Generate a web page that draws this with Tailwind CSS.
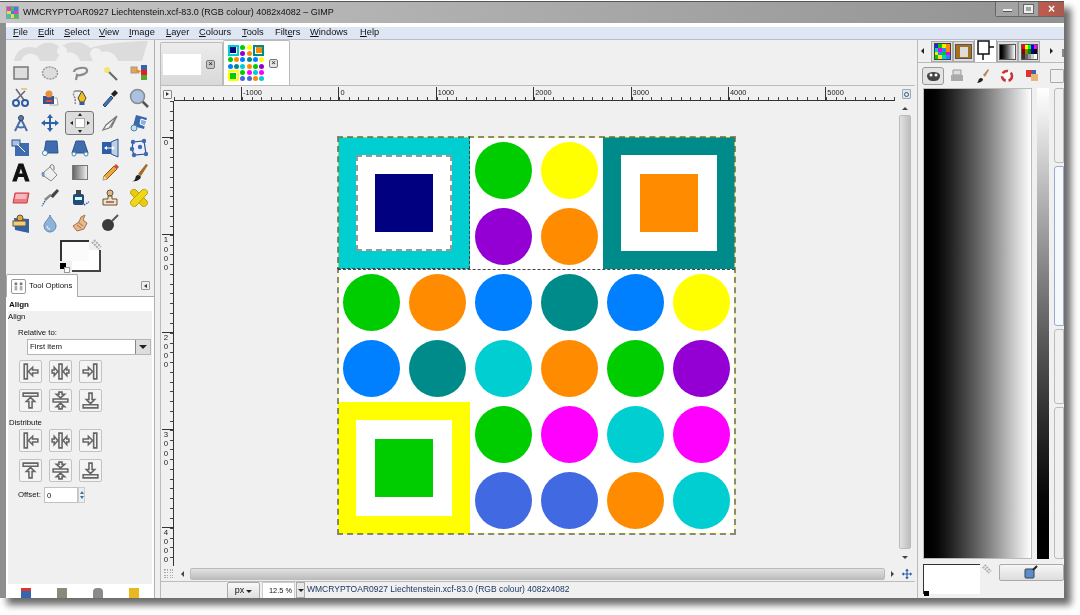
<!DOCTYPE html>
<html lang="en">
<head>
<meta charset="UTF-8">
<title>GIMP</title>
<script src="https://cdn.jsdelivr.net/npm/@tailwindcss/browser@4"></script>
</head>
<body class="w-[1080px] h-[615px] overflow-hidden bg-white font-['Liberation_Sans',sans-serif] text-[8px] text-[#111]">

<svg class="hidden">
  <symbol id="al" viewBox="0 0 20 20"><path d="M4 3h3v14H4zM8 10l4-4v2.500h5v3h-5V14z" fill="#f2f2f2" stroke="#666" stroke-width="1.500"/></symbol>
  <symbol id="ac" viewBox="0 0 20 20"><path d="M8.500 3h3v14h-3zM7.500 10L4 6v2.500H2v3h2V14zM12.500 10L16 6v2.500h2v3h-2V14z" fill="#f2f2f2" stroke="#666" stroke-width="1.500"/></symbol>
  <symbol id="ar" viewBox="0 0 20 20"><path d="M13 3h3v14h-3zM12 10L8 6v2.500H3v3h5V14z" fill="#f2f2f2" stroke="#666" stroke-width="1.500"/></symbol>
  <symbol id="at" viewBox="0 0 20 20"><path d="M3 3h14v3H3zM10 7l-4 4h2.500v6h3v-6H14z" fill="#f2f2f2" stroke="#666" stroke-width="1.500"/></symbol>
  <symbol id="am" viewBox="0 0 20 20"><path d="M3 8.500h14v3H3zM10 7.500L6 4h2.500V2h3v2H14zM10 12.500L6 16h2.500v2h3v-2H14z" fill="#f2f2f2" stroke="#666" stroke-width="1.500"/></symbol>
  <symbol id="ab" viewBox="0 0 20 20"><path d="M3 14h14v3H3zM10 13L6 9h2.500V3h3v6H14z" fill="#f2f2f2" stroke="#666" stroke-width="1.500"/></symbol>
</svg>

<div class="relative flex flex-col w-[1064px] h-[597px] mt-px bg-[#8e8e8e] shadow-[7px_7px_7px_#6b6b6b] blur-[0.3px]">

  <!-- title bar -->
  <div class="relative flex items-center h-[22px] pl-[6px] gap-[4px] bg-gradient-to-r from-[#c6c6c6] via-[#b5b5b5] via-30% to-[#929292] border-t border-[#555]">
    <div class="grid grid-cols-3 w-[13px] h-[13px] bg-[#dfe8f0] border border-[#999]">
      <i class="bg-[#e040c0]"></i><i class="bg-[#40c060]"></i><i class="bg-[#4080e0]"></i>
      <i class="bg-[#e0e040]"></i><i class="bg-[#4080e0]"></i><i class="bg-[#e040c0]"></i>
      <i class="bg-[#40c0c0]"></i><i class="bg-[#e0e040]"></i><i class="bg-[#40c060]"></i>
    </div>
    <span class="text-[9px] text-[#111] whitespace-nowrap">WMCRYPTOAR0927 Liechtenstein.xcf-83.0 (RGB colour) 4082x4082 – GIMP</span>
    <div class="absolute right-0 top-0 flex h-[15px] w-[69px] border-l border-b border-[#666] rounded-bl-[3px]">
      <div class="flex items-center justify-center w-[23px] bg-[#a3a3a3] border-r border-[#777]"><i class="block w-[9px] h-[3px] bg-[#eee] border-b border-[#555] mt-[3px]"></i></div>
      <div class="flex items-center justify-center w-[20px] bg-[#a3a3a3] border-r border-[#777]"><i class="block w-[9px] h-[8px] border-2 border-[#eee] outline outline-1 outline-[#666]"></i></div>
      <div class="flex-1 flex items-center justify-center text-white font-bold text-[12px] leading-none bg-gradient-to-r from-[#c25a4c] to-[#a85a50]">×</div>
    </div>
  </div>

  <div class="flex flex-col flex-1 min-h-0 ml-[6px] bg-[#f0f0f0]">
    <!-- menu -->
    <div class="h-[4px] bg-white"></div>
    <div class="flex items-center h-[13px] pl-[7px] bg-[#dfe6f3] border-b border-[#b9bfca] text-[9.300px] text-[#111] whitespace-nowrap">
      <span class="w-[25px]"><u>F</u>ile</span>
      <span class="w-[26px]"><u>E</u>dit</span>
      <span class="w-[35px]"><u>S</u>elect</span>
      <span class="w-[30px]"><u>V</u>iew</span>
      <span class="w-[37px]"><u>I</u>mage</span>
      <span class="w-[33px]"><u>L</u>ayer</span>
      <span class="w-[43px]"><u>C</u>olours</span>
      <span class="w-[33px]"><u>T</u>ools</span>
      <span class="w-[35px]">Filt<u>e</u>rs</span>
      <span class="w-[50px]"><u>W</u>indows</span>
      <span><u>H</u>elp</span>
    </div>

    <div class="flex flex-1 min-h-0">

      <!-- toolbox -->
      <div class="flex flex-col w-[149px] border-r border-[#b0b0b0]">
        <svg class="w-[148px] h-[21px] shrink-0" viewBox="0 0 148 21"><path d="M8 21C10 9 20 5 30 8C38 0 50 2 54 8C62 0 78 1 84 8C100 3 125 1 142 1L136 21H112C108 9 92 8 86 21H74C72 10 54 9 50 21H34C32 12 18 11 15 21Z" fill="#dcdcdc"/><circle cx="56" cy="11" r="5" fill="#f0f0f0"/><circle cx="90" cy="14" r="6" fill="#f0f0f0"/></svg>

        <div class="grid grid-cols-[repeat(5,29.600px)] auto-rows-[25px] shrink-0 -mt-px">
          <!-- row 1 -->
          <div class="flex items-center justify-center"><svg class="w-5 h-5" viewBox="0 0 20 20"><rect x="3" y="4" width="14" height="12" fill="#ddd" stroke="#777" stroke-width="1.500"/></svg></div>
          <div class="flex items-center justify-center"><svg class="w-5 h-5" viewBox="0 0 20 20"><ellipse cx="10" cy="10" rx="7.500" ry="6" fill="#ddd" stroke="#999" stroke-width="1.500" stroke-dasharray="2 1"/></svg></div>
          <div class="flex items-center justify-center"><svg class="w-5 h-5" viewBox="0 0 20 20"><path d="M4 9c0-4 12-6 13-2s-8 6-10 5l-1 5" fill="none" stroke="#8a8a8a" stroke-width="2.200"/></svg></div>
          <div class="flex items-center justify-center"><svg class="w-5 h-5" viewBox="0 0 20 20"><path d="M8 8l9 9" stroke="#666" stroke-width="2"/><circle cx="7" cy="7" r="3" fill="#f4e66a"/></svg></div>
          <div class="flex items-center justify-center"><svg class="w-5 h-5" viewBox="0 0 20 20"><rect x="12" y="2" width="6" height="5" fill="#3a62a8"/><rect x="12" y="7" width="6" height="5" fill="#d22"/><rect x="12" y="12" width="6" height="5" fill="#5a3"/><rect x="2" y="4" width="6" height="6" fill="#eda24a" stroke="#999"/><path d="M7 6l5 2-3 3z" fill="#e88a2a"/></svg></div>
          <!-- row 2 -->
          <div class="flex items-center justify-center"><svg class="w-5 h-5" viewBox="0 0 20 20"><path d="M5 1l8 11M14 3l-9 9" stroke="#667" stroke-width="1.500"/><path d="M10 1h6" stroke="#e8b878" stroke-width="1.500"/><circle cx="5" cy="15" r="3" fill="none" stroke="#2f5ca0" stroke-width="2"/><circle cx="14" cy="15" r="3" fill="none" stroke="#2f5ca0" stroke-width="2"/></svg></div>
          <div class="flex items-center justify-center"><svg class="w-5 h-5" viewBox="0 0 20 20"><path d="M12 10h5l1 7H10z" fill="#fff" stroke="#aaa"/><rect x="3" y="8" width="11" height="8" fill="#37528f"/><circle cx="9" cy="6" r="3.500" fill="#e9903a"/><path d="M6 12h6v2H6z" fill="#d44"/></svg></div>
          <div class="flex items-center justify-center"><svg class="w-5 h-5" viewBox="0 0 20 20"><path d="M5 3c-3 2-1 5 0 7s-1 4 1 7" fill="none" stroke="#888" stroke-width="1.500" stroke-dasharray="2 1"/><path d="M5 3h6" stroke="#888" stroke-width="1.500"/><path d="M12 3l4 7-2 4h-4l-2-4z" fill="#f0c020" stroke="#444"/><rect x="9.500" y="14" width="5" height="3" fill="#345a9c"/></svg></div>
          <div class="flex items-center justify-center"><svg class="w-5 h-5" viewBox="0 0 20 20"><path d="M3 17l8-9 2 2-8 9z" fill="#3f74b8" stroke="#27486f"/><path d="M11 6l4-4 3 3-4 4z" fill="#222"/></svg></div>
          <div class="flex items-center justify-center"><svg class="w-5 h-5" viewBox="0 0 20 20"><path d="M13 13l6 6" stroke="#555" stroke-width="2.500"/><circle cx="8.500" cy="8.500" r="7" fill="#a9c2e0" stroke="#8a8a8a" stroke-width="1.500"/></svg></div>
          <!-- row 3 -->
          <div class="flex items-center justify-center"><svg class="w-5 h-5" viewBox="0 0 20 20"><path d="M10 6L4 18M10 6l6 12M6 13c2 2 6 2 8 0" fill="none" stroke="#4a6ea8" stroke-width="2"/><circle cx="10" cy="5" r="2.500" fill="#5a7cb0" stroke="#345"/></svg></div>
          <div class="flex items-center justify-center"><svg class="w-5 h-5" viewBox="0 0 20 20"><path d="M10 1l3 4h-2v4h4V7l4 3-4 3v-2h-4v4h2l-3 4-3-4h2v-4H5v2l-4-3 4-3v2h4V5H7z" fill="#2d62aa"/></svg></div>
          <div class="flex items-center justify-center"><div class="flex items-center justify-center w-[29px] h-[24px] rounded-[3px] bg-[#dcdcdc] border border-[#777]"><svg class="w-5 h-5" viewBox="0 0 20 20"><rect x="5.500" y="5.500" width="9" height="9" fill="#fff" stroke="#aaa"/><path d="M10 0l2 3H8zM10 20l-2-3h4zM0 10l3-2v4zM20 10l-3 2V8z" fill="#222"/></svg></div></div>
          <div class="flex items-center justify-center"><svg class="w-5 h-5" viewBox="0 0 20 20"><path d="M17 3L6 12l-3 5 6-2zM17 3L11 15" fill="#f4f4f4" stroke="#777" stroke-width="1.200"/></svg></div>
          <div class="flex items-center justify-center"><svg class="w-5 h-5" viewBox="0 0 20 20"><path d="M7 2l11 3-3 11-11-3z" fill="#3b68ac"/><path d="M12 6l6 2-2 5-5-2z" fill="#8cb0dc" stroke="#fff"/><circle cx="5" cy="15" r="3" fill="#cde" stroke="#48a"/></svg></div>
          <!-- row 4 -->
          <div class="flex items-center justify-center"><svg class="w-5 h-5" viewBox="0 0 20 20"><rect x="4" y="5" width="14" height="13" fill="#3e6cae"/><rect x="1" y="2" width="8" height="6" fill="#a9c2e0" stroke="#2d5590"/><path d="M6 6l8 8" stroke="#fff"/></svg></div>
          <div class="flex items-center justify-center"><svg class="w-5 h-5" viewBox="0 0 20 20"><path d="M6 3h11l1 12H4z" fill="#3e6cae" stroke="#2d5590"/><circle cx="5" cy="15" r="2.500" fill="#fff" stroke="#48a"/></svg></div>
          <div class="flex items-center justify-center"><svg class="w-5 h-5" viewBox="0 0 20 20"><path d="M6 3h8l4 12H2z" fill="#3e6cae" stroke="#2d5590"/><circle cx="4" cy="16" r="2" fill="#fff" stroke="#48a"/><circle cx="16" cy="16" r="2" fill="#fff" stroke="#48a"/></svg></div>
          <div class="flex items-center justify-center"><svg class="w-5 h-5" viewBox="0 0 20 20"><path d="M2 4h9v12H2z" fill="#2d5fa8"/><path d="M11 4l7-3v18l-7-3z" fill="#bcd0e8" stroke="#2d5590"/><path d="M4 10l3-2v4zM15 10l-3-2v4z" fill="#fff"/><path d="M7 9.500h5v1H7z" fill="#fff"/></svg></div>
          <div class="flex items-center justify-center"><svg class="w-5 h-5" viewBox="0 0 20 20"><path d="M4 4l11-1 2 13-12 1-2-6z" fill="#eef" stroke="#2d5590" stroke-width="1.200"/><g fill="#3e6cae"><circle cx="4" cy="4" r="2.200"/><circle cx="15" cy="3" r="2.200"/><circle cx="17" cy="16" r="2.200"/><circle cx="5" cy="17" r="2.200"/><circle cx="3" cy="11" r="2.200"/><circle cx="11" cy="9" r="2.200"/></g></svg></div>
          <!-- row 5 -->
          <div class="flex items-center justify-center"><span class="font-black text-[24px] leading-none text-[#111] [-webkit-text-stroke:1px_#111]">A</span></div>
          <div class="flex items-center justify-center"><svg class="w-5 h-5" viewBox="0 0 20 20"><path d="M4 9l6-5 7 8-6 6-7-5z" fill="#eee" stroke="#888"/><path d="M10 4c0-3 4-3 4 0v3" fill="none" stroke="#777"/><path d="M2 9c-1 3 0 5 2 5V9z" fill="#6f94c4"/></svg></div>
          <div class="flex items-center justify-center"><div class="w-[16px] h-[15px] border border-[#777] bg-gradient-to-r from-[#666] to-[#eee]"></div></div>
          <div class="flex items-center justify-center"><svg class="w-5 h-5" viewBox="0 0 20 20"><path d="M3 17l1-4L14 3l3 3L7 16z" fill="#eca63a" stroke="#86591c"/><path d="M14 3l3 3 2-2-3-3z" fill="#d44"/><path d="M3 17l1-4 3 3z" fill="#f2d8ae"/></svg></div>
          <div class="flex items-center justify-center"><svg class="w-5 h-5" viewBox="0 0 20 20"><path d="M9 11L17 1l2 1-7 11z" fill="#a86a28"/><path d="M3 18c3 0 3-2 4-5 2-2 4-1 5 1-1 3-5 5-9 4z" fill="#222"/></svg></div>
          <!-- row 6 -->
          <div class="flex items-center justify-center"><svg class="w-5 h-5" viewBox="0 0 20 20"><path d="M4 5h14l-2 10H2z" fill="#ee7a82" stroke="#cc3c44"/><path d="M5 6h11l-1 5H4z" fill="#f9b8ba"/></svg></div>
          <div class="flex items-center justify-center"><svg class="w-5 h-5" viewBox="0 0 20 20"><path d="M17 1l2 2-6 7-3-2z" fill="#444"/><path d="M12 7L6 13l-2-2 6-5z" fill="#888"/><path d="M5 13l-3 5" stroke="#2d62aa" stroke-width="1.500" stroke-dasharray="1.500 1"/></svg></div>
          <div class="flex items-center justify-center"><svg class="w-5 h-5" viewBox="0 0 20 20"><rect x="3" y="6" width="11" height="11" rx="2" fill="#264a78"/><rect x="6" y="2" width="5" height="4" fill="#444"/><rect x="5" y="9" width="7" height="3" fill="#cfe"/><path d="M14 17l5-3" stroke="#2d62aa" stroke-width="1.500" stroke-dasharray="1.500 1"/></svg></div>
          <div class="flex items-center justify-center"><svg class="w-5 h-5" viewBox="0 0 20 20"><circle cx="10" cy="5" r="3" fill="#d9b98a" stroke="#6b5330"/><path d="M8 8h4v3h5v6H3v-6h5z" fill="#efe2c8" stroke="#6b5330"/><rect x="6" y="13" width="8" height="2" fill="#a77"/></svg></div>
          <div class="flex items-center justify-center"><svg class="w-5 h-5" viewBox="0 0 20 20"><path d="M2 6c-2-3 2-6 5-4l11 11c2 3-2 7-5 5z" fill="#e8cc10" stroke="#b8a010"/><path d="M18 6c2-3-2-6-5-4L2 13c-2 3 2 7 5 5z" fill="#f0d818" stroke="#b8a010"/></svg></div>
          <!-- row 7 -->
          <div class="flex items-center justify-center"><svg class="w-5 h-5" viewBox="0 0 20 20"><path d="M3 5l15 1v14L4 17z" fill="#3560a4"/><circle cx="9" cy="5" r="3" fill="#e0a83e" stroke="#654"/><rect x="2" y="8" width="13" height="5" fill="#f0d070" stroke="#654"/></svg></div>
          <div class="flex items-center justify-center"><svg class="w-5 h-5" viewBox="0 0 20 20"><path d="M10 2c1 4 6 7 6 11a6 6 0 01-12 0c0-4 5-7 6-11z" fill="#8fb3d8" stroke="#5c86b4"/><path d="M7 13c0 2 1 3 3 3" stroke="#fff" fill="none"/></svg></div>
          <div class="flex items-center justify-center"><svg class="w-5 h-5" viewBox="0 0 20 20"><path d="M15 2l-2 5 4 3-3 6-7 2-4-5 6-4 2-5z" fill="#eab78c" stroke="#a57248"/><path d="M8 9l5 4M7 12l4 3" stroke="#a57248"/></svg></div>
          <div class="flex items-center justify-center"><svg class="w-5 h-5" viewBox="0 0 20 20"><circle cx="8" cy="12" r="6" fill="#3b3b3b"/><path d="M12 8l6-6" stroke="#555" stroke-width="2"/></svg></div>
        </div>

        <!-- fg/bg colours -->
        <div class="relative h-[39px] shrink-0">
          <div class="absolute left-[66px] top-[15px] w-[29px] h-[22px] bg-white border-r-2 border-b-2 border-[#444]"></div>
          <div class="absolute left-[54px] top-[5px] w-[29px] h-[21px] bg-[#fbfbfb] border-t-2 border-l-2 border-[#333]"></div>
          <div class="absolute left-[54px] top-[28px] w-[6px] h-[6px] bg-black"></div>
          <div class="absolute left-[58px] top-[32px] w-[6px] h-[6px] bg-white border border-[#999]"></div>
          <svg class="absolute left-[85px] top-[4px] w-[11px] h-[11px]" viewBox="0 0 11 11"><path d="M1 3l7 7M3 1l7 7" stroke="#aaa" stroke-width="2" stroke-dasharray="2 1"/></svg>
        </div>

        <!-- tool options -->
        <div class="flex items-center shrink-0 -mb-px z-10">
          <div class="flex items-center h-[23px] w-[72px] gap-[3px] pl-[4px] bg-white border border-b-0 border-[#aaa] rounded-t-[2px] text-[7.800px] whitespace-nowrap">
            <svg class="w-[15px] h-[15px] shrink-0 border border-[#999] rounded-[2px]" viewBox="0 0 15 15"><path d="M3 3h3v3H3zM9 3h3v3H9z" fill="#777"/><rect x="3" y="7" width="3" height="5" fill="#aaa"/><rect x="9" y="7" width="3" height="5" fill="#aaa"/></svg>
            Tool Options
          </div>
          <div class="flex items-center justify-center w-[9px] h-[9px] ml-[63px] bg-[#eee] border border-[#999] rounded-[1px]"><i class="block border-y-[2px] border-r-[3px] border-y-transparent border-r-[#333]"></i></div>
        </div>
        <div class="flex flex-col flex-1 min-h-0 bg-white border-t border-[#aaa] overflow-hidden">
          <div class="h-[14px] pl-[3px] font-bold text-[8px] leading-[15px] text-[#111]">Align</div>
          <div class="flex flex-col h-[273px] mx-[2px] pl-[1px] bg-[#f0f0f0]">
            <div class="text-[7.800px] leading-[11px] -ml-[1px]">Align</div>
            <div class="mt-[5px] ml-[9px] text-[7.800px] leading-[11px]">Relative to:</div>
            <div class="flex items-center w-[124px] h-[16px] mt-[1px] ml-[18px] bg-white border border-[#b5b5b5] text-[7.800px] pl-[2px]">First item<span class="ml-auto flex items-center justify-center w-[15px] h-[14px] bg-[#ddd] border-l border-[#888]"><i class="block border-x-[4px] border-t-[4px] border-x-transparent border-t-[#222]"></i></span></div>
            <div class="grid grid-cols-[repeat(3,23px)] gap-x-[7px] gap-y-[6px] mt-[5px] ml-[10px]">
              <div class="h-[23px] border border-[#c2c2c2] rounded-[2px] bg-[#f4f4f4]"><svg class="w-[21px] h-[21px]"><use href="#al"/></svg></div>
              <div class="h-[23px] border border-[#c2c2c2] rounded-[2px] bg-[#f4f4f4]"><svg class="w-[21px] h-[21px]"><use href="#ac"/></svg></div>
              <div class="h-[23px] border border-[#c2c2c2] rounded-[2px] bg-[#f4f4f4]"><svg class="w-[21px] h-[21px]"><use href="#ar"/></svg></div>
              <div class="h-[23px] border border-[#c2c2c2] rounded-[2px] bg-[#f4f4f4]"><svg class="w-[21px] h-[21px]"><use href="#at"/></svg></div>
              <div class="h-[23px] border border-[#c2c2c2] rounded-[2px] bg-[#f4f4f4]"><svg class="w-[21px] h-[21px]"><use href="#am"/></svg></div>
              <div class="h-[23px] border border-[#c2c2c2] rounded-[2px] bg-[#f4f4f4]"><svg class="w-[21px] h-[21px]"><use href="#ab"/></svg></div>
            </div>
            <div class="mt-[5px] text-[7.800px] leading-[11px]">Distribute</div>
            <div class="grid grid-cols-[repeat(3,23px)] gap-x-[7px] gap-y-[7px] mt-[1px] ml-[10px]">
              <div class="h-[23px] border border-[#c2c2c2] rounded-[2px] bg-[#f4f4f4]"><svg class="w-[21px] h-[21px]"><use href="#al"/></svg></div>
              <div class="h-[23px] border border-[#c2c2c2] rounded-[2px] bg-[#f4f4f4]"><svg class="w-[21px] h-[21px]"><use href="#ac"/></svg></div>
              <div class="h-[23px] border border-[#c2c2c2] rounded-[2px] bg-[#f4f4f4]"><svg class="w-[21px] h-[21px]"><use href="#ar"/></svg></div>
              <div class="h-[23px] border border-[#c2c2c2] rounded-[2px] bg-[#f4f4f4]"><svg class="w-[21px] h-[21px]"><use href="#at"/></svg></div>
              <div class="h-[23px] border border-[#c2c2c2] rounded-[2px] bg-[#f4f4f4]"><svg class="w-[21px] h-[21px]"><use href="#am"/></svg></div>
              <div class="h-[23px] border border-[#c2c2c2] rounded-[2px] bg-[#f4f4f4]"><svg class="w-[21px] h-[21px]"><use href="#ab"/></svg></div>
            </div>
            <div class="flex items-center mt-[5px] ml-[9px] text-[7.800px]">
              <span class="w-[26px]">Offset:</span>
              <div class="w-[34px] h-[16px] pl-[2px] leading-[15px] bg-white border border-[#c2c2c2]">0</div>
              <div class="flex flex-col justify-center items-center gap-[2px] w-[7px] h-[16px] bg-[#eee] border border-[#ccc]"><i class="block border-x-[2px] border-b-[3px] border-x-transparent border-b-[#37a]"></i><i class="block border-x-[2px] border-t-[3px] border-x-transparent border-t-[#37a]"></i></div>
            </div>
          </div>
          <div class="flex flex-1 pl-[15px] pt-[4px] gap-[26px]">
            <i class="block w-[10px] h-[10px] bg-[#3566ac] border-t-[3px] border-[#d33]"></i>
            <i class="block w-[10px] h-[10px] bg-[#8a8a7a]"></i>
            <i class="block w-[10px] h-[10px] bg-[#8a8a8a] rounded-t-[4px]"></i>
            <i class="block w-[10px] h-[10px] bg-[#e8b820]"></i>
          </div>
        </div>
      </div>

      <!-- image window -->
      <div class="flex flex-col w-[755px] ml-[5px] min-h-0">
        <!-- tabs -->
        <div class="flex items-end h-[45px] shrink-0">
          <div class="flex items-center h-[43px] w-[63px] pl-[2px] bg-gradient-to-b from-[#ececec] to-[#d9d9d9] border border-b-0 border-[#bbb] rounded-t-[2px]">
            <div class="w-[38px] h-[21px] bg-white"></div>
            <div class="flex items-center justify-center w-[9px] h-[9px] ml-[5px] bg-[#c8c8c8] border border-[#777] rounded-[2px] text-[8px] leading-none">×</div>
          </div>
          <div class="flex items-center h-[45px] w-[67px] pl-[3px] bg-white border border-b-0 border-[#bbb] rounded-t-[2px]">
            <div class="grid grid-cols-6 grid-rows-6 w-[38px] h-[38px]">
              <div class="col-span-2 row-span-2 p-[1px]"><div class="w-full h-full border-2 border-[#00ced1] flex items-center justify-center"><i class="block w-[6px] h-[6px] bg-[#000080]"></i></div></div>
              <i class="m-auto block w-[5px] h-[5px] rounded-full bg-[#00cd00]"></i>
              <i class="m-auto block w-[5px] h-[5px] rounded-full bg-[#ffff00]"></i>
              <div class="col-span-2 row-span-2 p-[1px]"><div class="w-full h-full border-2 border-[#008b8b] flex items-center justify-center"><i class="block w-[6px] h-[6px] bg-[#ff8c00]"></i></div></div>
              <i class="m-auto block w-[5px] h-[5px] rounded-full bg-[#9400d3]"></i>
              <i class="m-auto block w-[5px] h-[5px] rounded-full bg-[#ff8c00]"></i>
              <i class="m-auto block w-[5px] h-[5px] rounded-full bg-[#00cd00]"></i>
              <i class="m-auto block w-[5px] h-[5px] rounded-full bg-[#ff8c00]"></i>
              <i class="m-auto block w-[5px] h-[5px] rounded-full bg-[#007fff]"></i>
              <i class="m-auto block w-[5px] h-[5px] rounded-full bg-[#008b8b]"></i>
              <i class="m-auto block w-[5px] h-[5px] rounded-full bg-[#007fff]"></i>
              <i class="m-auto block w-[5px] h-[5px] rounded-full bg-[#ffff00]"></i>
              <i class="m-auto block w-[5px] h-[5px] rounded-full bg-[#007fff]"></i>
              <i class="m-auto block w-[5px] h-[5px] rounded-full bg-[#008b8b]"></i>
              <i class="m-auto block w-[5px] h-[5px] rounded-full bg-[#00ced1]"></i>
              <i class="m-auto block w-[5px] h-[5px] rounded-full bg-[#ff8c00]"></i>
              <i class="m-auto block w-[5px] h-[5px] rounded-full bg-[#00cd00]"></i>
              <i class="m-auto block w-[5px] h-[5px] rounded-full bg-[#9400d3]"></i>
              <div class="col-span-2 row-span-2 p-[1px]"><div class="w-full h-full border-2 border-[#ffff00] flex items-center justify-center"><i class="block w-[6px] h-[6px] bg-[#00cd00]"></i></div></div>
              <i class="m-auto block w-[5px] h-[5px] rounded-full bg-[#00cd00]"></i>
              <i class="m-auto block w-[5px] h-[5px] rounded-full bg-[#ff00ff]"></i>
              <i class="m-auto block w-[5px] h-[5px] rounded-full bg-[#00ced1]"></i>
              <i class="m-auto block w-[5px] h-[5px] rounded-full bg-[#ff00ff]"></i>
              <i class="m-auto block w-[5px] h-[5px] rounded-full bg-[#4169e1]"></i>
              <i class="m-auto block w-[5px] h-[5px] rounded-full bg-[#4169e1]"></i>
              <i class="m-auto block w-[5px] h-[5px] rounded-full bg-[#ff8c00]"></i>
              <i class="m-auto block w-[5px] h-[5px] rounded-full bg-[#00ced1]"></i>
            </div>
            <div class="flex items-center justify-center w-[9px] h-[9px] ml-[4px] bg-[#e4e4e4] border border-[#777] rounded-[2px] text-[8px] leading-none">×</div>
          </div>
        </div>

        <!-- canvas frame -->
        <div class="flex flex-col flex-1 min-h-0 border-l border-t border-[#bbb]">
          <!-- hruler -->
          <div class="flex h-[14px] shrink-0 mt-px">
            <div class="flex items-center justify-center w-[13px] pl-[1px]"><div class="flex items-center justify-center w-[9px] h-[9px] bg-[#f6f6f6] border border-[#888] rounded-[1px]"><i class="block border-y-[2px] border-l-[3px] border-y-transparent border-l-[#333]"></i></div></div>
            <div class="flex w-[722px] border-b border-[#333] text-[7.400px] leading-[11px] text-[#222] overflow-hidden">
              <div class="relative w-[67px] shrink-0"><i class="absolute bottom-0 inset-x-0 h-[3px] bg-[repeating-linear-gradient(90deg,#444_0,#444_1px,transparent_1px,transparent_9.740px)]"></i></div>
              <div class="relative w-[97.400px] shrink-0 border-l border-[#333] pl-[1px]">-1000<i class="absolute bottom-0 inset-x-0 h-[3px] bg-[repeating-linear-gradient(90deg,#444_0,#444_1px,transparent_1px,transparent_9.740px)]"></i></div>
              <div class="relative w-[97.400px] shrink-0 border-l border-[#333] pl-[1px]">0<i class="absolute bottom-0 inset-x-0 h-[3px] bg-[repeating-linear-gradient(90deg,#444_0,#444_1px,transparent_1px,transparent_9.740px)]"></i></div>
              <div class="relative w-[97.400px] shrink-0 border-l border-[#333] pl-[1px]">1000<i class="absolute bottom-0 inset-x-0 h-[3px] bg-[repeating-linear-gradient(90deg,#444_0,#444_1px,transparent_1px,transparent_9.740px)]"></i></div>
              <div class="relative w-[97.400px] shrink-0 border-l border-[#333] pl-[1px]">2000<i class="absolute bottom-0 inset-x-0 h-[3px] bg-[repeating-linear-gradient(90deg,#444_0,#444_1px,transparent_1px,transparent_9.740px)]"></i></div>
              <div class="relative w-[97.400px] shrink-0 border-l border-[#333] pl-[1px]">3000<i class="absolute bottom-0 inset-x-0 h-[3px] bg-[repeating-linear-gradient(90deg,#444_0,#444_1px,transparent_1px,transparent_9.740px)]"></i></div>
              <div class="relative w-[97.400px] shrink-0 border-l border-[#333] pl-[1px]">4000<i class="absolute bottom-0 inset-x-0 h-[3px] bg-[repeating-linear-gradient(90deg,#444_0,#444_1px,transparent_1px,transparent_9.740px)]"></i></div>
              <div class="relative w-[97.400px] shrink-0 border-l border-[#333] pl-[1px]">5000<i class="absolute bottom-0 inset-x-0 h-[3px] bg-[repeating-linear-gradient(90deg,#444_0,#444_1px,transparent_1px,transparent_9.740px)]"></i></div>
            </div>
            <div class="flex items-center justify-center w-[20px] pl-[3px]"><div class="flex items-center justify-center w-[9px] h-[10px] bg-[#dde6f0] border border-[#9ab] rounded-[1px]"><i class="block w-[5px] h-[5px] rounded-full border border-[#456]"></i></div></div>
          </div>

          <div class="flex h-[465px] shrink-0">
            <!-- vruler -->
            <div class="flex flex-col w-[13px] border-r border-[#333] text-[7.800px] leading-[9.200px] text-[#222] text-center overflow-hidden pl-[1px]">
              <div class="relative h-[36px] shrink-0"><i class="absolute right-0 inset-y-0 w-[3px] bg-[repeating-linear-gradient(180deg,#444_0,#444_1px,transparent_1px,transparent_9.740px)]"></i></div>
              <div class="relative h-[97.400px] shrink-0 border-t border-[#333] pr-[3px]">0<i class="absolute right-0 inset-y-0 w-[3px] bg-[repeating-linear-gradient(180deg,#444_0,#444_1px,transparent_1px,transparent_9.740px)]"></i></div>
              <div class="relative h-[97.400px] shrink-0 border-t border-[#333] pr-[3px]">1<br>0<br>0<br>0<i class="absolute right-0 inset-y-0 w-[3px] bg-[repeating-linear-gradient(180deg,#444_0,#444_1px,transparent_1px,transparent_9.740px)]"></i></div>
              <div class="relative h-[97.400px] shrink-0 border-t border-[#333] pr-[3px]">2<br>0<br>0<br>0<i class="absolute right-0 inset-y-0 w-[3px] bg-[repeating-linear-gradient(180deg,#444_0,#444_1px,transparent_1px,transparent_9.740px)]"></i></div>
              <div class="relative h-[97.400px] shrink-0 border-t border-[#333] pr-[3px]">3<br>0<br>0<br>0<i class="absolute right-0 inset-y-0 w-[3px] bg-[repeating-linear-gradient(180deg,#444_0,#444_1px,transparent_1px,transparent_9.740px)]"></i></div>
              <div class="relative h-[40px] shrink-0 border-t border-[#333] pr-[3px]">4<br>0<br>0<br>0<i class="absolute right-0 inset-y-0 w-[3px] bg-[repeating-linear-gradient(180deg,#444_0,#444_1px,transparent_1px,transparent_9.740px)]"></i></div>
            </div>

            <!-- canvas -->
            <div class="w-[722px] pt-[36px] pl-[164px] bg-[#f0f0f0]">
              <div class="relative grid grid-cols-[repeat(6,66.170px)] grid-rows-[repeat(6,66.170px)] w-[397px] h-[397px] bg-white">
                <div class="col-span-2 row-span-2 flex items-center justify-center bg-[#00ced1]">
                  <div class="flex items-center justify-center w-[96px] h-[96px] bg-white border-2 border-dashed border-[#555]/60 rounded-[2px]"><div class="w-[58px] h-[58px] bg-[#000080]"></div></div>
                </div>
                <i class="m-auto block w-[57px] h-[57px] rounded-full bg-[#00cd00]"></i>
                <i class="m-auto block w-[57px] h-[57px] rounded-full bg-[#ffff00]"></i>
                <div class="col-span-2 row-span-2 flex items-center justify-center bg-[#008b8b]">
                  <div class="flex items-center justify-center w-[96px] h-[96px] bg-white"><div class="w-[58px] h-[58px] bg-[#ff8c00]"></div></div>
                </div>
                <i class="m-auto block w-[57px] h-[57px] rounded-full bg-[#9400d3]"></i>
                <i class="m-auto block w-[57px] h-[57px] rounded-full bg-[#ff8c00]"></i>

                <i class="m-auto block w-[57px] h-[57px] rounded-full bg-[#00cd00]"></i>
                <i class="m-auto block w-[57px] h-[57px] rounded-full bg-[#ff8c00]"></i>
                <i class="m-auto block w-[57px] h-[57px] rounded-full bg-[#007fff]"></i>
                <i class="m-auto block w-[57px] h-[57px] rounded-full bg-[#008b8b]"></i>
                <i class="m-auto block w-[57px] h-[57px] rounded-full bg-[#007fff]"></i>
                <i class="m-auto block w-[57px] h-[57px] rounded-full bg-[#ffff00]"></i>

                <i class="m-auto block w-[57px] h-[57px] rounded-full bg-[#007fff]"></i>
                <i class="m-auto block w-[57px] h-[57px] rounded-full bg-[#008b8b]"></i>
                <i class="m-auto block w-[57px] h-[57px] rounded-full bg-[#00ced1]"></i>
                <i class="m-auto block w-[57px] h-[57px] rounded-full bg-[#ff8c00]"></i>
                <i class="m-auto block w-[57px] h-[57px] rounded-full bg-[#00cd00]"></i>
                <i class="m-auto block w-[57px] h-[57px] rounded-full bg-[#9400d3]"></i>

                <div class="col-span-2 row-span-2 flex items-center justify-center bg-[#ffff00]">
                  <div class="flex items-center justify-center w-[96px] h-[96px] bg-white"><div class="w-[58px] h-[58px] bg-[#00cd00]"></div></div>
                </div>
                <i class="m-auto block w-[57px] h-[57px] rounded-full bg-[#00cd00]"></i>
                <i class="m-auto block w-[57px] h-[57px] rounded-full bg-[#ff00ff]"></i>
                <i class="m-auto block w-[57px] h-[57px] rounded-full bg-[#00ced1]"></i>
                <i class="m-auto block w-[57px] h-[57px] rounded-full bg-[#ff00ff]"></i>
                <i class="m-auto block w-[57px] h-[57px] rounded-full bg-[#4169e1]"></i>
                <i class="m-auto block w-[57px] h-[57px] rounded-full bg-[#4169e1]"></i>
                <i class="m-auto block w-[57px] h-[57px] rounded-full bg-[#ff8c00]"></i>
                <i class="m-auto block w-[57px] h-[57px] rounded-full bg-[#00ced1]"></i>

                <!-- selection marching ants -->
                <div class="absolute inset-0 border border-[#ffff00]/50 pointer-events-none"></div>
                <div class="absolute -inset-px border-2 border-dashed border-[#444]/60 pointer-events-none"></div>
                <div class="absolute left-0 top-[132px] w-[397px] border-t border-dashed border-[#444] pointer-events-none"></div>
                <div class="absolute -left-px -top-px w-[133px] h-[133px] border-r border-b border-dashed border-[#444] pointer-events-none"></div>
              </div>
            </div>

            <!-- vscroll -->
            <div class="flex flex-col items-center w-[19px] pl-[3px] pr-[4px]">
              <i class="block mt-[6px] border-x-[3px] border-b-[3px] border-x-transparent border-b-[#444]"></i>
              <div class="w-[12px] h-[434px] mt-[5px] bg-gradient-to-r from-[#e2e2e2] to-[#bdbdbd] border border-[#bbb] rounded-[2px]"></div>
              <i class="block mt-[7px] border-x-[3px] border-t-[3px] border-x-transparent border-t-[#444]"></i>
            </div>
          </div>

          <!-- hscroll -->
          <div class="flex items-center h-[16px] shrink-0 border-b border-[#bbb]">
            <div class="grid grid-cols-2 gap-[2px] w-[9px] h-[9px] ml-[3px]"><i class="border border-dotted border-[#aaa]"></i><i class="border border-dotted border-[#aaa]"></i><i class="border border-dotted border-[#aaa]"></i><i class="border border-dotted border-[#aaa]"></i></div>
            <i class="block ml-[8px] border-y-[3px] border-r-[3px] border-y-transparent border-r-[#444]"></i>
            <div class="w-[695px] h-[12px] ml-[6px] bg-gradient-to-b from-[#e2e2e2] to-[#bdbdbd] border border-[#bbb] rounded-[2px]"></div>
            <i class="block ml-[6px] border-y-[3px] border-l-[3px] border-y-transparent border-l-[#444]"></i>
            <svg class="w-[12px] h-[12px] ml-[7px]" viewBox="0 0 20 20"><path d="M10 1l3 4h-2v4h4V7l4 3-4 3v-2h-4v4h2l-3 4-3-4h2v-4H5v2l-4-3 4-3v2h4V5H7z" fill="#2d62aa"/></svg>
          </div>

          <!-- status bar -->
          <div class="flex items-start flex-1 pl-[66px] text-[7.400px] overflow-hidden whitespace-nowrap">
            <div class="flex items-center justify-center gap-[2px] w-[33px] h-[18px] text-[9px] bg-gradient-to-b from-[#f8f8f8] to-[#ddd] border border-[#aaa] rounded-[2px]">px<i class="block border-x-[3px] border-t-[3px] border-x-transparent border-t-[#222]"></i></div>
            <div class="flex items-center justify-end w-[33px] h-[18px] ml-[2px] bg-white border border-[#ccc] pr-[2px]">12.5 %</div>
            <div class="flex items-center justify-center w-[9px] h-[16px] ml-px bg-[#e8e8e8] border border-[#aaa]"><i class="block border-x-[3px] border-t-[3px] border-x-transparent border-t-[#222]"></i></div>
            <span class="ml-[2px] text-[8.500px] leading-[15px] text-[#15315c]">WMCRYPTOAR0927 Liechtenstein.xcf-83.0 (RGB colour) 4082x4082</span>
          </div>
        </div>
      </div>

      <!-- right dock -->
      <div class="flex flex-col flex-1 min-w-0 ml-[2px] border-l border-[#bbb] overflow-hidden">
        <div class="flex items-end h-[22px] shrink-0 pl-[4px] -ml-px bg-[#f0f0f0]">
          <i class="block mb-[8px] border-y-[3px] border-r-[3px] border-y-transparent border-r-[#222]"></i>
          <div class="flex items-end ml-[7px]">
            <div class="flex items-center justify-center w-[22px] h-[21px] bg-[#ddd] border border-[#aaa]"><div class="grid grid-cols-4 w-[17px] h-[17px] border border-[#444] bg-[#ffe]"><i class="bg-[#22e]"></i><i class="bg-[#0c0]"></i><i class="bg-[#ee0]"></i><i class="bg-[#f80]"></i><i class="bg-[#0cc]"></i><i class="bg-[#e0e]"></i><i class="bg-[#28f]"></i><i class="bg-[#f80]"></i><i class="bg-[#ee0]"></i><i class="bg-[#28f]"></i><i class="bg-[#0c0]"></i><i class="bg-[#e0e]"></i><i class="bg-[#0c0]"></i><i class="bg-[#ee0]"></i><i class="bg-[#0cc]"></i><i class="bg-[#28f]"></i></div></div>
            <div class="flex items-center justify-center w-[21px] h-[21px] bg-[#ddd] border border-[#aaa]"><div class="flex items-center justify-center w-[17px] h-[15px] bg-[#a8701c] border border-[#555]"><i class="block w-[8px] h-[10px] bg-[#ddd]"></i></div></div>
            <div class="flex items-start justify-center w-[23px] h-[23px] bg-white border border-b-0 border-[#aaa]"><svg class="w-[18px] h-[20px]" viewBox="0 0 18 20"><path d="M1 1h11v13H1zM6 14v6M12 7h5" fill="none" stroke="#111" stroke-width="1.500"/></svg></div>
            <div class="flex items-center justify-center w-[21px] h-[21px] bg-[#ddd] border border-[#aaa]"><i class="block w-[17px] h-[16px] border border-[#555] bg-gradient-to-r from-black to-white"></i></div>
            <div class="flex items-center justify-center w-[22px] h-[21px] bg-[#ddd] border border-[#aaa]"><div class="grid grid-cols-5 w-[17px] h-[16px] border border-[#555]"><i class="bg-[#f00]"></i><i class="bg-[#ff0]"></i><i class="bg-[#0f0]"></i><i class="bg-[#00f]"></i><i class="bg-[#f0f]"></i><i class="bg-[#800]"></i><i class="bg-[#880]"></i><i class="bg-[#080]"></i><i class="bg-[#008]"></i><i class="bg-black"></i><i class="bg-[#333]"></i><i class="bg-[#666]"></i><i class="bg-[#999]"></i><i class="bg-[#ccc]"></i><i class="bg-white"></i></div></div>
          </div>
          <i class="block mb-[8px] ml-[10px] border-y-[3px] border-l-[3px] border-y-transparent border-l-[#222]"></i>
          <i class="block mb-[5px] ml-[9px] w-[4px] h-[8px] border border-[#888]"></i>
        </div>
        <div class="flex items-center h-[26px] shrink-0 border-t border-[#bbb] pl-[4px] gap-[11px]">
          <div class="flex items-center justify-center w-[23px] h-[18px] -mr-[5px] bg-[#e4e4e4] border border-[#999] rounded-[3px]"><svg class="w-[15px] h-[12px]" viewBox="0 0 15 12"><path d="M1 5c1-4 12-4 13 0 0 5-3 6-6.500 6S1 10 1 5z" fill="#444"/><circle cx="5" cy="5" r="1.500" fill="#fff"/><circle cx="10" cy="5" r="1.500" fill="#fff"/></svg></div>
          <svg class="w-[14px] h-[14px] shrink-0" viewBox="0 0 14 14"><path d="M3 1h8v5H3z" fill="#ddd" stroke="#999"/><rect x="1" y="6" width="12" height="6" fill="#aaa"/></svg>
          <svg class="w-[14px] h-[14px] shrink-0" viewBox="0 0 14 14"><path d="M8 6l5-6 1 1-4 7z" fill="#b88a58"/><path d="M1 14c2 0 2-2 3-4 2-2 4-1 4 1-1 2-4 3-7 3z" fill="#222"/></svg>
          <svg class="w-[14px] h-[14px] shrink-0" viewBox="0 0 14 14"><circle cx="7" cy="7" r="5" fill="#fff" stroke="#c33" stroke-width="2.500" stroke-dasharray="6 3"/></svg>
          <svg class="w-[14px] h-[14px] shrink-0" viewBox="0 0 14 14"><rect x="1" y="1" width="7" height="7" fill="#d33"/><rect x="6" y="5" width="7" height="7" fill="#eab57a"/><rect x="7" y="1" width="4" height="4" fill="#36a"/></svg>
          <div class="w-[14px] h-[14px] shrink-0 border border-[#aaa] rounded-[1px]"></div>
        </div>
        <div class="flex h-[471px] shrink-0 pl-[5px]">
          <div class="w-[114px] h-full border border-[#bbb] bg-gradient-to-r from-black to-white"></div>
          <div class="w-[13px] h-full ml-[5px] bg-gradient-to-b from-white via-[#f0f0f0] via-5% to-black"></div>
          <div class="flex flex-col gap-[3px] w-[10px] ml-[5px]">
            <div class="h-[75px] border border-[#bbb] rounded-l-[3px] bg-[#f0f0f0]"></div>
            <div class="h-[160px] border border-[#9ac] rounded-l-[3px] bg-[#f6f9fc]"></div>
            <div class="h-[75px] border border-[#bbb] rounded-l-[3px] bg-[#f0f0f0]"></div>
            <div class="flex-1 border border-[#bbb] rounded-l-[3px] bg-[#f0f0f0]"></div>
          </div>
        </div>
        <div class="flex flex-1 pt-[5px] pl-[5px] overflow-hidden">
          <div class="relative w-[58px] h-[30px] bg-white border-t border-l border-[#333]"><i class="absolute left-0 top-[26px] w-[5px] h-[5px] bg-black"></i></div>
          <svg class="w-[10px] h-[10px] ml-[2px]" viewBox="0 0 11 11"><path d="M1 3l7 7M3 1l7 7" stroke="#aaa" stroke-width="2" stroke-dasharray="2 1"/></svg>
          <div class="flex items-start justify-center w-[66px] h-[17px] ml-[7px] bg-gradient-to-b from-[#f6f6f6] to-[#ddd] border border-[#aaa] rounded-[2px]"><svg class="w-[14px] h-[14px]" viewBox="0 0 14 14"><rect x="1" y="4" width="9" height="9" rx="1" fill="#5d8cc8" stroke="#345"/><path d="M9 5l4-4" stroke="#222" stroke-width="2"/></svg></div>
        </div>
      </div>

    </div>
  </div>
</div>
</body>
</html>
